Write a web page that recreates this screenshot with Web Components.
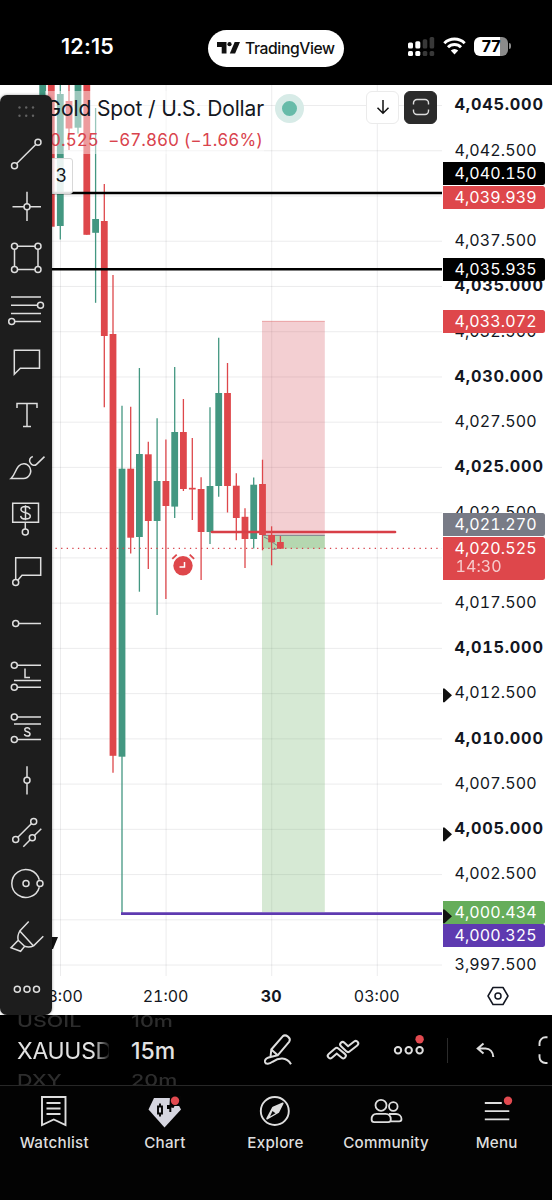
<!DOCTYPE html>
<html lang="en">
<head>
<meta charset="utf-8">
<title>Gold Spot / U.S. Dollar</title>
<style>
  body {
    margin: 0;
    width: 552px;
    height: 1200px;
    overflow: hidden;
    background: #000;
    font-family: Inter, "Liberation Sans", sans-serif;
  }
</style>
</head>
<body>
<phone-screen></phone-screen>

<script>
/**
 * define an element whose shadow root is cloned from a template
 */
const define = function (name, html, setup) {
  const template = document.createElement('template')
  template.innerHTML = html
  customElements.define(name, class extends HTMLElement {
    constructor () {
      super()
      this.attachShadow({mode: 'open'})
      this.shadowRoot.appendChild(document.importNode(template.content, true))
    }

    connectedCallback () {
      if (setup) setup.call(this, this.shadowRoot)
    }
  })
}

// drawing tools, every one on a 52 x 52 grid
const TOOLS = {
  trend: '<path d="M16.7 35.6 35.8 16.5"/><circle cx="14.5" cy="37.8" r="3"/><circle cx="38" cy="14.3" r="3"/>',
  cross: '<path d="M12.5 26.7H24M30 26.7h11M27 11.8v11.9M27 29.7v11.4"/><circle cx="27" cy="26.7" r="3"/>',
  rect: '<path d="M17.5 14.2H35M17.5 37.6H35M14.5 17.2v17.4M38 17.2v17.4"/><circle cx="14.5" cy="14.2" r="3"/><circle cx="38" cy="14.2" r="3"/><circle cx="14.5" cy="37.6" r="3"/><circle cx="38" cy="37.6" r="3"/>',
  fib: '<path d="M11 13h30M11 21.2h26.5M11 29.4h30M14.5 37.6H41"/><circle cx="40.5" cy="21.2" r="3"/><circle cx="11.7" cy="37.6" r="3"/>',
  bubble: '<path d="M14.3 14.3h25.2v18H20.3l-6 6z"/>',
  text: '<path d="M17 19v-4.4h20V19M27 14.6v23M23 37.6h8"/>',
  brush: '<path d="M11 37.5c4-3.5 4.2-8.5 7.5-12.3 3.2-3.5 8.5-3.2 10.8.5 3.6 5.6-.5 11.8-5.8 11.8z"/><path d="M32.8 15.5c-3 1-4 4-2.6 6.2 1.6 2.8 4.5 3.4 6.3 1.7l8-7.8"/>',
  price: '<path d="M12.7 10.2h25.8v19H12.7zM25.3 29.2V36M25.5 12.2v15M30 16.2c-.3-2-2-2.8-4.5-2.8-2.7 0-4.5 1-4.5 3 0 4.2 9.3 2.3 9.3 6.700 0 2-2 3-4.700 3-3 0-4.700-1.200-4.900-3.200"/><circle cx="25.3" cy="39" r="3"/>',
  callout: '<path d="M15.7 34.4V12.7h25v17.5H22l-4.2 5"/><circle cx="15.7" cy="37.4" r="3"/>',
  ray: '<path d="M18.7 26.5H41"/><circle cx="15.7" cy="26.5" r="3"/>',
  long: '<path d="M17.3 15.3H41M14 30.6h27M17.3 37.3H41M25 18.5v9h5"/><circle cx="14.3" cy="15.3" r="3"/><circle cx="14.3" cy="37.3" r="3"/>',
  short: '<path d="M17.3 15.1H41M14 22.1h27M17.3 37.4H41M29.8 27.7c-.2-1.4-1.2-2-2.5-2s-2.5.7-2.5 2c0 2.8 5.2 1.4 5.2 4.3 0 1.4-1.2 2.1-2.7 2.1s-2.6-.7-2.8-2.1"/><circle cx="14.3" cy="15.1" r="3"/><circle cx="14.3" cy="37.4" r="3"/>',
  vertical: '<path d="M27 12.3v11M27 29.3v11.2"/><circle cx="27" cy="26.3" r="3"/>',
  channel: '<path d="M17.8 31.3 31.6 17.5M23.3 40.7l6.9-6.9M34.4 29.6l6.9-6.9"/><circle cx="33.7" cy="15.4" r="3"/><circle cx="15.7" cy="33.4" r="3"/><circle cx="32.3" cy="31.7" r="3"/>',
  circle: '<path d="M39.3 21.8a14 14 0 1 0 0 7.400"/><circle cx="26" cy="25.5" r="3"/><circle cx="40" cy="25.5" r="3"/>',
  marker: '<path d="M28.7 10.6 19.8 20c-1.8 3.2-2.4 6.2-1.6 9.3L11 36.8l9.6 3.5 4-5c3.6 1.4 5.5 1.3 9-.5l9.7-9.5M19.8 20l13.5 14.8M18.2 29.3l6.4 6"/>',
  more: '<circle cx="17.3" cy="26.2" r="3"/><circle cx="27" cy="26.2" r="3"/><circle cx="36.5" cy="26.2" r="3"/>'
}

// x, high, body top, body bottom, low (px), u = up / d = down
const CANDLES = [
  [42.7, 80, 80, 215, 230, 'u'],
  [51.3, 80, 80, 226.7, 226.7, 'd'],
  [60.3, 80, 94, 226, 239.5, 'u'],
  [69, 80, 101, 128.5, 150, 'd'],
  [78, 80, 80, 127.7, 133.5, 'u'],
  [86.8, 80, 80, 234.8, 234.8, 'd'],
  [95.6, 108, 219, 232.8, 302.8, 'u'],
  [104.3, 184, 221, 336, 407.3, 'd'],
  [113, 275, 334, 755.8, 772.8, 'd'],
  [122, 405.7, 468.7, 756.7, 913, 'u'],
  [130.7, 406.7, 468.7, 537.7, 553.5, 'd'],
  [139.4, 368, 454, 537, 591.7, 'u'],
  [148.3, 441.7, 454.3, 521, 569, 'd'],
  [157.1, 418.3, 481, 521, 615, 'u'],
  [165.9, 439.5, 481, 506, 599, 'd'],
  [174.7, 367, 432, 506.6, 518, 'u'],
  [183.4, 399, 432, 489, 491, 'd'],
  [192.3, 438, 487.8, 489.5, 520, 'd'],
  [201.1, 477.3, 489, 532, 580, 'd'],
  [210, 407.3, 486, 532, 544, 'u'],
  [218.7, 337.7, 393, 486, 496.7, 'u'],
  [227.5, 363, 393, 486, 512.5, 'd'],
  [236.3, 473.3, 485.7, 518, 540.3, 'd'],
  [245, 508.3, 516.8, 539, 568, 'd'],
  [253.7, 477.5, 484.7, 539, 548.5, 'u'],
  [262.5, 459.7, 484, 535, 550.3, 'd'],
  [271.6, 526.3, 535, 542.3, 565.3, 'd'],
  [280.4, 536, 542, 548.7, 548.7, 'd']
]

define('status-bar', `<style>
    :host{
      display: flex;
      box-sizing: border-box;
      height: 85px;
      padding: 29px 41px 18px 61px;
      justify-content: space-between;
      align-items: center;
      background: #000;
      color: #fff;
    }
    .time{
      width: 147px;
      font-size: 21.5px;
      font-weight: 600;
      letter-spacing: .2px;
      line-height: 32px;
      margin-top: -4px;
    }
    .pill{
      display: flex;
      align-items: center;
      gap: 5px;
      box-sizing: border-box;
      width: 136px;
      height: 37px;
      padding-left: 9px;
      border-radius: 19px;
      background: #fff;
      color: #111;
      font-size: 15.7px;
      font-weight: 500;
      letter-spacing: -.4px;
    }
    .right{
      display: flex;
      align-items: center;
      gap: 8px;
      margin: -4px 0 0 auto;
    }
    .battery{
      display: flex;
      align-items: center;
    }
    .level{
      width: 34px;
      height: 19px;
      border-radius: 6px;
      background: linear-gradient(90deg, #fff 77%, #8b8b8b 77%);
      color: #000;
      text-align: center;
      font-size: 16px;
      line-height: 19px;
      font-weight: 700;
      letter-spacing: -.3px;
    }
    .cap{
      width: 2px;
      height: 6px;
      margin-left: 1px;
      border-radius: 0 2px 2px 0;
      background: #8b8b8b;
    }
  </style>
  <span class="time">12:15</span>
  <span class="pill">
    <svg width="23" height="12" viewBox="0 0 23 12" fill="#111"><path d="M0 0h9.5v11.5H4.7V5H0z"/><circle cx="12.5" cy="2.2" r="2.1"/><path d="M17.7 0H23l-4.900 11.500h-5.300z"/></svg>
    <span>TradingView</span>
  </span>
  <span class="right">
    <svg width="27" height="19" viewBox="0 0 27 19">
      <g fill="#fff"><rect y="5.5" width="5" height="6" rx="1.5"/><rect x="7.3" y="4.3" width="5" height="7.2" rx="1.5"/><rect y="14" width="5" height="5" rx="1.5"/><rect x="7.3" y="14" width="5" height="5" rx="1.5"/></g>
      <g fill="#383838"><rect x="14.7" y="2.3" width="4.6" height="9.2" rx="1.5"/><rect x="21.6" width="4.6" height="11.5" rx="1.5"/><rect x="14.7" y="14" width="4.6" height="5" rx="1.5"/><rect x="21.6" y="14" width="4.6" height="5" rx="1.5"/></g>
    </svg>
    <svg width="23" height="18" viewBox="0 0 23 18"><g fill="none" stroke="#fff" stroke-width="2.9"><path d="M1.3 6.2a14.5 14.5 0 0 1 20.4 0"/><path d="M5 10.2a9.2 9.2 0 0 1 13 0"/></g><path d="M11.5 17.5 7.8 13.6a5.3 5.3 0 0 1 7.400 0z" fill="#fff"/></svg>
    <span class="battery"><span class="level">77</span><span class="cap"></span></span>
  </span>`)

define('chart-plot', `<style>
    :host{ display: block; }
    svg{ display: block; }
  </style>
  <svg width="443" height="892" viewBox="0 85 443 892">
    <g class="grid" stroke="#2a2e39" stroke-opacity=".09" stroke-width="1"></g>
    <g class="candles"></g>
    <path d="M50 193.1h392M50 269.3h392" stroke="#000" stroke-width="2.5"/>
    <path d="M212 532h183" stroke="#d83f47" stroke-width="2.7" stroke-linecap="round"/>
    <path d="M121 913.7H442" stroke="#5e3ab0" stroke-width="2.7"/>
    <path class="position-stop" fill="#cf404d" fill-opacity=".25" d="M262 321h62.8v214.3H262z"/>
    <path class="position-target" fill="#5ba753" fill-opacity=".25" d="M262 535.3h62.8V912H262z"/>
    <path fill="#5ba753" fill-opacity=".27" d="M262 535.3h62.8v13.2H262z"/>
    <path d="M262 321.3h62.8" stroke="#de474b" stroke-opacity=".35"/>
    <path d="M262 535.3h62.8" stroke="#787b86"/>
    <path d="M264 537c5 2 9 6 14 9M271 549.2h5l4.500-2.500" fill="none" stroke="#787b86"/>
    <g class="front"></g>
    <path d="M55.5 548.3H442" stroke="#d8434c" stroke-width="1.3" stroke-dasharray="1.3 4.3"/>
    <circle cx="183" cy="565.8" r="9.7" fill="#de474b"/>
    <path d="M184.500 562v5h-5" fill="none" stroke="#fff" stroke-width="1.5"/>
    <path d="M172.3 558.8 176.7 554.6M189.7 554.6l4.4 4.2" stroke="#de474b" stroke-width="1.8"/>
    <path d="M48 937h10l-5 12h-5z" fill="#111"/>
  </svg>`, function (root) {
  let grid = ''
  for (let i = 0; i < 20; i++) {
    grid += `<path d="M50 ${105.5 + i * 45.24}H442"/>`
  }
  for (let i = 0; i < 4; i++) {
    grid += `<path d="M${60.5 + i * 105.6} 85V976"/>`
  }
  root.querySelector('.grid').innerHTML = grid
  const draw = ([x, high, top, bottom, low, dir]) => {
    const color = dir === 'u' ? '#439781' : '#de474b'
    return `<path d="M${x} ${high}V${low}" stroke="${color}" stroke-width="1.3"/>
      <rect x="${x - 3.4}" y="${top}" width="6.8" height="${bottom - top}" fill="${color}"/>`
  }
  root.querySelector('.candles').innerHTML = CANDLES.slice(0, -3).map(draw).join('')
  // the latest candles stay above the position tool
  root.querySelector('.front').innerHTML = CANDLES.slice(-3).map(draw).join('')
})

define('price-axis', `<style>
    :host{
      display: block;
      position: relative;
      width: 109px;
      height: 892px;
      color: #131722;
      font-size: 16px;
      font-variant-numeric: tabular-nums;
      letter-spacing: .1px;
    }
    .ticks{
      display: grid;
      grid-auto-rows: 45.24px;
      align-items: center;
      padding-left: 11.5px;
      margin-top: -3.2px;
      line-height: 20px;
    }
    b{ font-weight: 700; font-size: 16.3px; letter-spacing: .75px; }
    svg{
      position: absolute;
      left: 0;
      top: 0;
      z-index: 2;
    }
  </style>
  <div class="ticks"></div>
  <slot></slot>
  <svg width="12" height="892" viewBox="0 85 12 892"><path fill="#111" d="M0 688.5h1.5L9 695.3l-7.500 7H0zM0 827.5h1.500L9 834.300l-7.500 7H0zM0 909.500h1.500L9 916.300l-7.500 7H0z"/></svg>`, function (root) {
  let ticks = ''
  for (let i = 0; i < 20; i++) {
    const price = 4045 - i * 2.5
    // these three are covered by price tags
    if ([4040, 4020, 4000].includes(price)) {
      ticks += '<span></span>'
      continue
    }
    const label = price.toLocaleString('en-US', {minimumFractionDigits: 3})
    ticks += price % 5 === 0 ? `<b>${label}</b>` : `<span>${label}</span>`
  }
  root.querySelector('.ticks').innerHTML = ticks
})

define('price-tag', `<style>
    :host{
      display: block;
      position: absolute;
      z-index: 1;
      left: 0;
      top: var(--y);
      width: 102px;
      height: 23px;
      box-sizing: border-box;
      padding-left: 11.5px;
      border-radius: 0 2.5px 2.5px 0;
      background: var(--tag);
      color: #fff;
      line-height: 22px;
    }
    :host([tall]){ height: 43px; }
    ::slotted(small){
      display: block;
      font-size: 16px;
      line-height: 19px;
      margin: -2px 0 0 1px;
      opacity: .72;
    }
  </style>
  <slot></slot>`)

define('time-axis', `<style>
    :host{
      display: flex;
      height: 38px;
      padding-left: 7.2px;
      align-items: center;
      color: #131722;
      font-size: 16px;
      font-variant-numeric: tabular-nums;
    }
    ::slotted(*){
      width: 105.6px;
      text-align: center;
    }
    svg{ margin-left: 57px; }
  </style>
  <slot></slot>
  <svg width="22" height="22" viewBox="0 0 22 22" fill="none" stroke="#131722" stroke-width="1.5"><path d="M6 2.5h10l5 8.500-5 8.500H6L1 11z" stroke-linejoin="round"/><circle cx="11" cy="11" r="3"/></svg>`)

define('chart-legend', `<style>
    :host{
      position: absolute;
      left: 45px;
      top: 6px;
      width: 397px;
      display: flex;
      flex-direction: column;
      align-items: flex-start;
    }
    .row{
      display: flex;
      align-items: center;
      width: 100%;
      height: 34px;
    }
    .title, .quote{ background: rgba(255,255,255,.46); white-space: pre; box-sizing: border-box; }
    .title{
      width: 219px;
      height: 34px;
      font-size: 21px;
      line-height: 36px;
      padding-left: .5px;
      color: #131722;
      letter-spacing: -.12px;
    }
    .quote{
      width: 219px;
      height: 29px;
      padding-left: 5px;
      line-height: 31px;
      font-size: 17px;
      font-variant-numeric: tabular-nums;
      color: #d9434d;
      letter-spacing: .05px;
    }
    .live{
      width: 15px;
      height: 15px;
      border: 7.5px solid #d7ebe7;
      border-radius: 50%;
      background: #67bba9;
      margin-left: 11px;
    }
    .button{
      box-sizing: border-box;
      display: grid;
      place-items: center;
      width: 33px;
      height: 33px;
      border-radius: 6px;
      border: 1.5px solid #ebebeb;
      background: #fff;
      margin: -2px 0 0 auto;
    }
    .dark{
      background: #2b2b2b;
      border-color: #2b2b2b;
      margin: -2px 5px 0 5px;
    }
    .count{
      box-sizing: border-box;
      width: 28px;
      height: 36px;
      margin-top: 4px;
      padding-left: 9.5px;
      border: 1px solid #d8d8d8;
      border-radius: 3px;
      background: rgba(255,255,255,.88);
      font-size: 18px;
      line-height: 34px;
      color: #131722;
    }
  </style>
  <div class="row">
    <span class="title">Gold Spot / U.S. Dollar</span>
    <span class="live"></span>
    <span class="button"><svg width="14" height="16" viewBox="0 0 14 16" fill="none" stroke="#111" stroke-width="1.5"><path d="M7 1v13M1.5 8.7 7 14.2l5.5-5.5"/></svg></span>
    <span class="button dark"><svg width="18" height="18" viewBox="0 0 18 18" fill="none" stroke="#ddd" stroke-width="1.4"><path d="M1.5 6.5V5A3.5 3.5 0 0 1 5 1.5h8A3.5 3.5 0 0 1 16.5 5v1.5M1.5 11.5V13A3.5 3.5 0 0 0 5 16.5h8a3.5 3.5 0 0 0 3.5-3.5v-1.5"/></svg></span>
  </div>
  <div class="quote">0.525  −67.860 (−1.66%)</div>
  <div class="count">3</div>`)

define('tool-rail', `<style>
    :host{
      position: absolute;
      z-index: 3;
      left: 0;
      top: 10px;
      width: 52px;
      height: 920px;
      display: flex;
      flex-direction: column;
      border-radius: 7px;
      background: #1d1d1d;
      box-shadow: 0 0 3px rgba(0,0,0,.4);
    }
    .grip{
      display: block;
      margin: 10.5px 0 9.7px 18px;
      flex: none;
    }
    .tools svg{ display: block; }
  </style>
  <svg class="grip" width="17" height="12.5" viewBox="0 0 17 12.5" fill="#626262"><circle cx="1.5" cy="1.5" r="1.2"/><circle cx="8.2" cy="1.5" r="1.2"/><circle cx="15" cy="1.5" r="1.2"/><circle cx="1.5" cy="9.8" r="1.2"/><circle cx="8.2" cy="9.8" r="1.2"/><circle cx="15" cy="9.8" r="1.2"/></svg>
  <div class="tools"></div>`, function (root) {
  root.querySelector('.tools').innerHTML = Object.keys(TOOLS).map(name =>
    `<svg width="52" height="52.2" viewBox="0 0 52 52.2" fill="none" stroke="#dedede" stroke-width="1.5">${TOOLS[name]}</svg>`
  ).join('')
})

define('chart-pane', `<style>
    :host{
      display: grid;
      grid-template: 892px 38px / 443px 109px;
      position: relative;
      height: 930px;
      background: #fff;
    }
    time-axis{ grid-column: 1 / 3; }
  </style>
  <chart-plot></chart-plot>
  <price-axis>
    <price-tag style="--y: 77px; --tag: #000">4,040.150</price-tag>
    <price-tag style="--y: 100.5px; --tag: #de474b">4,039.939</price-tag>
    <price-tag style="--y: 173px; --tag: #000">4,035.935</price-tag>
    <price-tag style="--y: 225px; --tag: #de474b">4,033.072</price-tag>
    <price-tag style="--y: 428px; --tag: #787b86">4,021.270</price-tag>
    <price-tag tall style="--y: 451.5px; --tag: #de474b">4,020.525<small>14:30</small></price-tag>
    <price-tag style="--y: 815.5px; --tag: #66ad5b">4,000.434</price-tag>
    <price-tag style="--y: 839px; --tag: #5e3ab0">4,000.325</price-tag>
  </price-axis>
  <time-axis><span>18:00</span><span>21:00</span><b>30</b><span>03:00</span></time-axis>
  <chart-legend></chart-legend>
  <tool-rail></tool-rail>`)

define('wheel-picker', `<style>
    :host{
      display: grid;
      grid-template-rows: 20px 32px 28px;
      height: 71px;
      overflow: hidden;
      color: #e2e2e2;
      font-size: 23px;
      font-weight: 500;
      line-height: 32px;
      white-space: nowrap;
    }
    ::slotted(i){
      font-style: normal;
      font-size: 21.5px;
      color: #2d2d2d;
      line-height: 28px;
      transform: scaleY(.77);
    }
    ::slotted(i:first-child){ margin-top: -8px; }
    ::slotted(i:last-child){ margin-top: -1px; }
  </style>
  <slot></slot>`)

define('symbol-bar', `<style>
    :host{
      position: relative;
      display: flex;
      box-sizing: border-box;
      height: 71px;
      background: #000;
      border-bottom: 1px solid #272727;
      overflow: hidden;
    }
    .symbol{ width: 92px; margin: 0 22px 0 17px; }
    .symbol b{
      font-weight: 400;
      letter-spacing: -.3px;
      overflow: hidden;
      -webkit-mask: linear-gradient(90deg, #000 76px, transparent 94px);
      mask: linear-gradient(90deg, #000 76px, transparent 94px);
    }
    .period{ width: 133px; }
    .period b{ font-weight: 500; }
    svg{ display: block; flex: none; }
  </style>
  <wheel-picker class="symbol"><i>USOIL</i><b>XAUUSD</b><i>DXY</i></wheel-picker>
  <wheel-picker class="period"><i>10m</i><b>15m</b><i>20m</i></wheel-picker>
  <svg width="288" height="70" viewBox="264 1015 288 70" fill="none" stroke="#dedede" stroke-width="2" stroke-linejoin="round">
    <path d="M270.5 1057l.8-7.5 11.4-13.2c3-2.6 8.8 1.7 6.6 5.3l-11.6 13.7zM271.3 1049.5l6.4 5.8"/>
    <path d="M271 1057c-3.5.2-6.5 2.2-6 5 .6 2.8 4.5 2 7.5-.2 6-4 14-5.5 18.5 2.5"/>
    <g stroke-linecap="round">
      <path d="M330.3 1055.8l6.4-5.400 6.600 5.400" stroke-width="7"/><path d="M330.3 1055.800l6.400-5.400 6.600 5.400" stroke="#000" stroke-width="3"/>
      <path d="M342.7 1044.5l5.3 5 7.700-6" stroke-width="7"/><path d="M342.700 1044.500l5.300 5 7.700-6" stroke="#000" stroke-width="3"/>
    </g>
    <circle cx="398" cy="1050.3" r="3.2"/><circle cx="408.7" cy="1050.3" r="3.2"/><circle cx="419.6" cy="1050.3" r="3.2"/>
    <circle cx="419.6" cy="1039.3" r="4.2" fill="#e24a50" stroke="none"/>
    <path d="M447.5 1038v25" stroke="#2b2b2b" stroke-width="1"/>
    <path d="M483.5 1043.5l-5.8 5 5.8 5M478 1048.5h7.5c4.5 0 7.500 3.500 7.800 8.500" stroke-linejoin="miter"/>
    <path d="M547.5 1037.3h-2a6 6 0 0 0-6 6v2.7M547.5 1063h-2a6 6 0 0 1-6-6v-2.7" stroke-width="1.9"/>
  </svg>`)

define('tab-item', `<style>
    :host{
      flex: 1 1 0;
      display: flex;
      flex-direction: column;
      align-items: center;
      padding-top: 7px;
      color: #dedede;
      font-size: 15.2px;
      font-weight: 500;
      letter-spacing: .25px;
      line-height: 20px;
    }
    .label{ margin-top: 4px; }
  </style>
  <slot name="icon"></slot>
  <span class="label"><slot></slot></span>`)

define('tab-bar', `<style>
    :host{
      display: flex;
      height: 114px;
      margin-left: -1px;
      background: #030303;
    }
    svg{ display: block; }
  </style>
  <tab-item><svg slot="icon" width="36" height="36" viewBox="0 0 36 36" fill="none" stroke="#dedede" stroke-width="1.9"><path d="M6 4h23.5v28l-11.7-5.5L6 32z"/><path d="M10.5 10h14M10.5 15.5h14M10.5 21h14"/></svg>Watchlist</tab-item>
  <tab-item><svg slot="icon" width="36" height="36" viewBox="0 0 36 36"><path d="M7 5h21l6 11.5-16.5 18-16-18z" fill="#d6d6e0"/><path d="M13 10.5v3M13 20.5v3M11 13.5h4v7h-4z" fill="none" stroke="#050505" stroke-width="1.9"/><path d="M23 3h11v10h-6.5l-1 2-2.2-.5V19h-2v-3H20v-4h2.5z" fill="#050505"/><circle cx="28" cy="7.8" r="4.2" fill="#e24a50"/></svg>Chart</tab-item>
  <tab-item><svg slot="icon" width="36" height="36" viewBox="0 0 36 36"><circle cx="17.8" cy="18" r="14" fill="none" stroke="#dedede" stroke-width="1.9"/><path d="M25.8 10.3 16 14.5 10 25.7 21.5 19z" fill="#dedede" stroke="#dedede" stroke-width="1.6" stroke-linejoin="round"/><path d="m15.5 18 3 2.3-5.5 3.200z" fill="#050505"/></svg>Explore</tab-item>
  <tab-item><svg slot="icon" width="36" height="36" viewBox="0 0 36 36" fill="none" stroke="#dedede" stroke-width="1.8"><circle cx="13" cy="12.3" r="5.5"/><circle cx="25.3" cy="13.5" r="4.3"/><path d="M8.5 20.9h9c3.3 0 5.3 2.3 5.3 5.6 0 1.7-.8 2.7-2.5 2.7H6.2c-1.8 0-2.6-1-2.6-2.700 0-3.300 1.800-5.600 4.900-5.600zM21 21h7c3 0 5.500 2 5.500 5 0 1.400-.8 2.300-2.300 2.300h-8.500"/></svg>Community</tab-item>
  <tab-item><svg slot="icon" width="36" height="36" viewBox="0 0 36 36" fill="none" stroke="#dedede" stroke-width="1.8"><path d="M5.8 10h17M5.8 18.2h24.5M5.8 26.3h24.5"/><circle cx="29" cy="7.8" r="4.2" fill="#e24a50" stroke="none"/></svg>Menu</tab-item>`)

define('phone-screen', `<style>
    :host{
      display: flex;
      flex-direction: column;
      width: 552px;
      height: 1200px;
      overflow: hidden;
    }
  </style>
  <status-bar></status-bar>
  <chart-pane></chart-pane>
  <symbol-bar></symbol-bar>
  <tab-bar></tab-bar>`)
</script>
</body>
</html>
